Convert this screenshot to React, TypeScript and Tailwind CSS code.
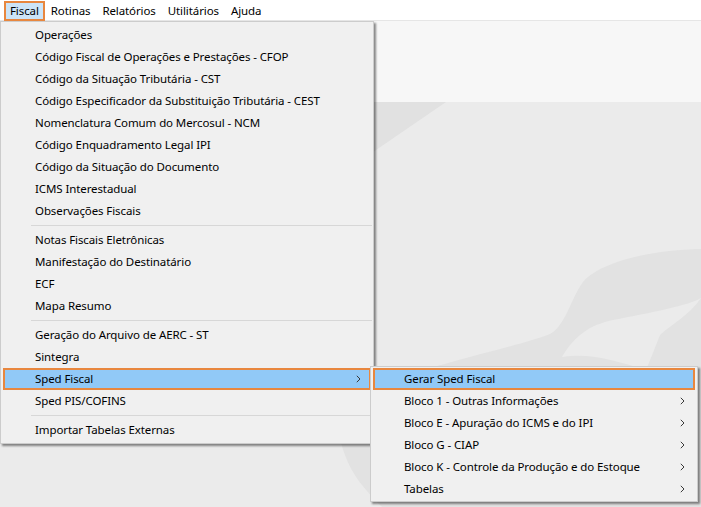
import React from 'react';

type Item = { label: string; arrow?: boolean; active?: boolean } | 'sep';

const mainItems: Item[] = [
    { label: 'Operações' },
    { label: 'Código Fiscal de Operações e Prestações - CFOP' },
    { label: 'Código da Situação Tributária - CST' },
    { label: 'Código Especificador da Substituição Tributária - CEST' },
    { label: 'Nomenclatura Comum do Mercosul - NCM' },
    { label: 'Código Enquadramento Legal IPI' },
    { label: 'Código da Situação do Documento' },
    { label: 'ICMS Interestadual' },
    { label: 'Observações Fiscais' },
    'sep',
    { label: 'Notas Fiscais Eletrônicas' },
    { label: 'Manifestação do Destinatário' },
    { label: 'ECF' },
    { label: 'Mapa Resumo' },
    'sep',
    { label: 'Geração do Arquivo de AERC - ST' },
    { label: 'Sintegra' },
    { label: 'Sped Fiscal', arrow: true, active: true },
    { label: 'Sped PIS/COFINS' },
    'sep',
    { label: 'Importar Tabelas Externas' },
];

const subItems: Item[] = [
    { label: 'Gerar Sped Fiscal', active: true },
    { label: 'Bloco 1 - Outras Informações', arrow: true },
    { label: 'Bloco E - Apuração do ICMS e do IPI', arrow: true },
    { label: 'Bloco G - CIAP', arrow: true },
    { label: 'Bloco K - Controle da Produção e do Estoque', arrow: true },
    { label: 'Tabelas', arrow: true },
];

const Chevron = () => (
    <svg width="5" height="8" viewBox="0 0 5 8" className="shrink-0">
        <path d="M0.8 0.8 L4 4 L0.8 7.2" fill="none" stroke="#3a3a3a" strokeWidth="1" />
    </svg>
);

const MenuRow = ({ item, textPad }: { item: Exclude<Item, 'sep'>; textPad: string }) => (
    <div
        className={`mx-[2px] h-[22px] flex items-center justify-between border-2 pr-[8px] ${textPad} ${
            item.active ? 'bg-[#91c9f7] border-[#e8873f]' : 'border-transparent'
        }`}
    >
        <span className="whitespace-nowrap">{item.label}</span>
        {item.arrow && <Chevron />}
    </div>
);

export default function App() {
    return (
        <div
            className="relative w-[701px] h-[507px] overflow-hidden bg-white text-black text-[11.5px] tracking-[-0.1px]"
            style={{ fontFamily: '"Noto Sans", "Open Sans", sans-serif' }}
        >
            {/* Menu bar */}
            <div className="h-[20px] flex items-start pl-[4px] bg-white">
                {['Fiscal', 'Rotinas', 'Relatórios', 'Utilitários', 'Ajuda'].map((m, i) => (
                    <div
                        key={m}
                        className={`h-[20px] mt-[1px] px-[4px] flex items-center border-2 ${
                            i === 0 ? 'bg-[#cce4f7] border-[#e8873f]' : 'border-transparent'
                        }`}
                    >
                        {m}
                    </div>
                ))}
            </div>

            {/* Workspace background */}
            <div className="h-[487px] border-t border-[#e6e6e6] bg-[#ebebeb] flex flex-col">
                <div className="h-[81px] bg-[#f7f7f7]" />
            </div>
            <svg className="absolute left-0 top-0" width="701" height="507" viewBox="0 0 701 507">
                <path d="M360 102 L446 102 L376 150 L360 162 Z" fill="#e1e1e1" />
                <path
                    d="M701 249 C650 250 600 262 583 282 C570 300 566 325 550 334 C520 346 440 362 380 385 C340 400 334 430 345 455 C352 475 365 490 382 507 L701 507 Z"
                    fill="#e2e2e2"
                />
                <path
                    d="M562 357 C575 335 590 325 613 320 C650 313 690 305 701 298 C690 315 670 325 660 335 C655 348 650 360 646 370 C620 362 590 352 562 357 Z"
                    fill="#ebebeb"
                />
            </svg>

            {/* Fiscal dropdown */}
            <div className="absolute left-0 top-[21px] w-[374px] bg-[#f0f0f0] border border-[#cccccc] py-[1px] shadow-[2px_2px_2px_rgba(0,0,0,0.45)]">
                <div className="pt-[1px] pb-[1px]">
                    {mainItems.map((item, i) =>
                        item === 'sep' ? (
                            <div key={i} className="h-[7px] flex items-center pl-[30px] pr-[1px]">
                                <div className="h-px w-full bg-[#d7d7d7]" />
                            </div>
                        ) : (
                            <MenuRow key={i} item={item} textPad="pl-[30px]" />
                        )
                    )}
                </div>
            </div>

            {/* Sped Fiscal submenu */}
            <div className="absolute left-[370px] top-[366px] w-[328px] bg-[#f0f0f0] border border-[#cccccc] py-[1px] shadow-[2px_2px_2px_rgba(0,0,0,0.45)]">
                {subItems.map((item, i) =>
                    item === 'sep' ? null : <MenuRow key={i} item={item} textPad="pl-[29px]" />
                )}
            </div>
        </div>
    );
}
